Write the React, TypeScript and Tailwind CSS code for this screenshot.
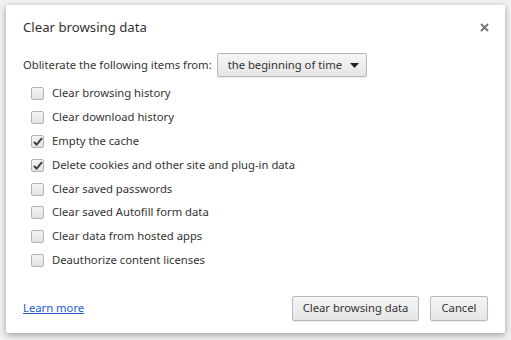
const items = [
  { label: "Clear browsing history", checked: false },
  { label: "Clear download history", checked: false },
  { label: "Empty the cache", checked: true },
  { label: "Delete cookies and other site and plug-in data", checked: true },
  { label: "Clear saved passwords", checked: false },
  { label: "Clear saved Autofill form data", checked: false },
  { label: "Clear data from hosted apps", checked: false },
  { label: "Deauthorize content licenses", checked: false },
];

function Checkbox({ checked }: { checked: boolean }) {
  return (
    <span className="flex h-[13px] w-[13px] items-center justify-center rounded-[2px] border border-[#b4b4b4] bg-gradient-to-b from-[#f4f4f4] to-[#e2e2e2]">
      {checked && (
        <svg width="10" height="9" viewBox="0 0 10 9">
          <path d="M1 5 L3.6 7.6 L9 1.2" fill="none" stroke="#404040" strokeWidth="2" />
        </svg>
      )}
    </span>
  );
}

export default function App() {
  return (
    <main
      className="h-[340px] w-[511px] bg-[#f0f0f0] pl-[6px] pt-[5px]"
      style={{ fontFamily: '"Noto Sans", "Open Sans", sans-serif' }}
    >
      <div className="flex h-[328px] w-[499px] flex-col rounded-[2px] bg-white px-[17px] text-[11.25px] text-[#333] shadow-[0_2px_6px_rgba(0,0,0,0.35)]">
        <div className="flex h-[47px] items-center justify-between pb-[2px]">
          <h1 className="text-[13.2px] text-[#333]">Clear browsing data</h1>
          <svg width="9" height="9" viewBox="0 0 9 9" className="mr-[-1px]">
            <path d="M1 1 L8 8 M8 1 L1 8" stroke="#777" strokeWidth="2" />
          </svg>
        </div>

        <div className="flex items-center gap-[5px] pt-[1px]">
          <span>Obliterate the following items from:</span>
          <div className="flex h-[24px] w-[150px] items-center justify-between whitespace-nowrap rounded-[2px] border border-[#b9b9b9] bg-gradient-to-b from-[#f5f5f5] to-[#e6e6e6] pl-[10px] pr-[7px] shadow-[0_1px_1px_rgba(0,0,0,0.08)]">
            <span>the beginning of time</span>
            <svg width="9" height="5" viewBox="0 0 9 5">
              <path d="M0 0 H9 L4.5 5 Z" fill="#222" />
            </svg>
          </div>
        </div>

        <ul className="mt-[5px] flex flex-col pl-[8px]">
          {items.map((item) => (
            <li key={item.label} className="flex h-[23.8px] items-center gap-[8px]">
              <Checkbox checked={item.checked} />
              <span>{item.label}</span>
            </li>
          ))}
        </ul>

        <div className="mt-auto mb-[12px] flex items-center justify-between">
          <a className="text-[#1a5dd6] underline">Learn more</a>
          <div className="flex gap-[11px]">
            <button className="h-[25px] w-[127px] rounded-[2px] border border-[#b9b9b9] bg-gradient-to-b from-[#f5f5f5] to-[#e6e6e6] text-[#333] shadow-[0_1px_1px_rgba(0,0,0,0.08)]">
              Clear browsing data
            </button>
            <button className="h-[25px] w-[58px] rounded-[2px] border border-[#b9b9b9] bg-gradient-to-b from-[#f5f5f5] to-[#e6e6e6] text-[#333] shadow-[0_1px_1px_rgba(0,0,0,0.08)]">
              Cancel
            </button>
          </div>
        </div>
      </div>
    </main>
  );
}
